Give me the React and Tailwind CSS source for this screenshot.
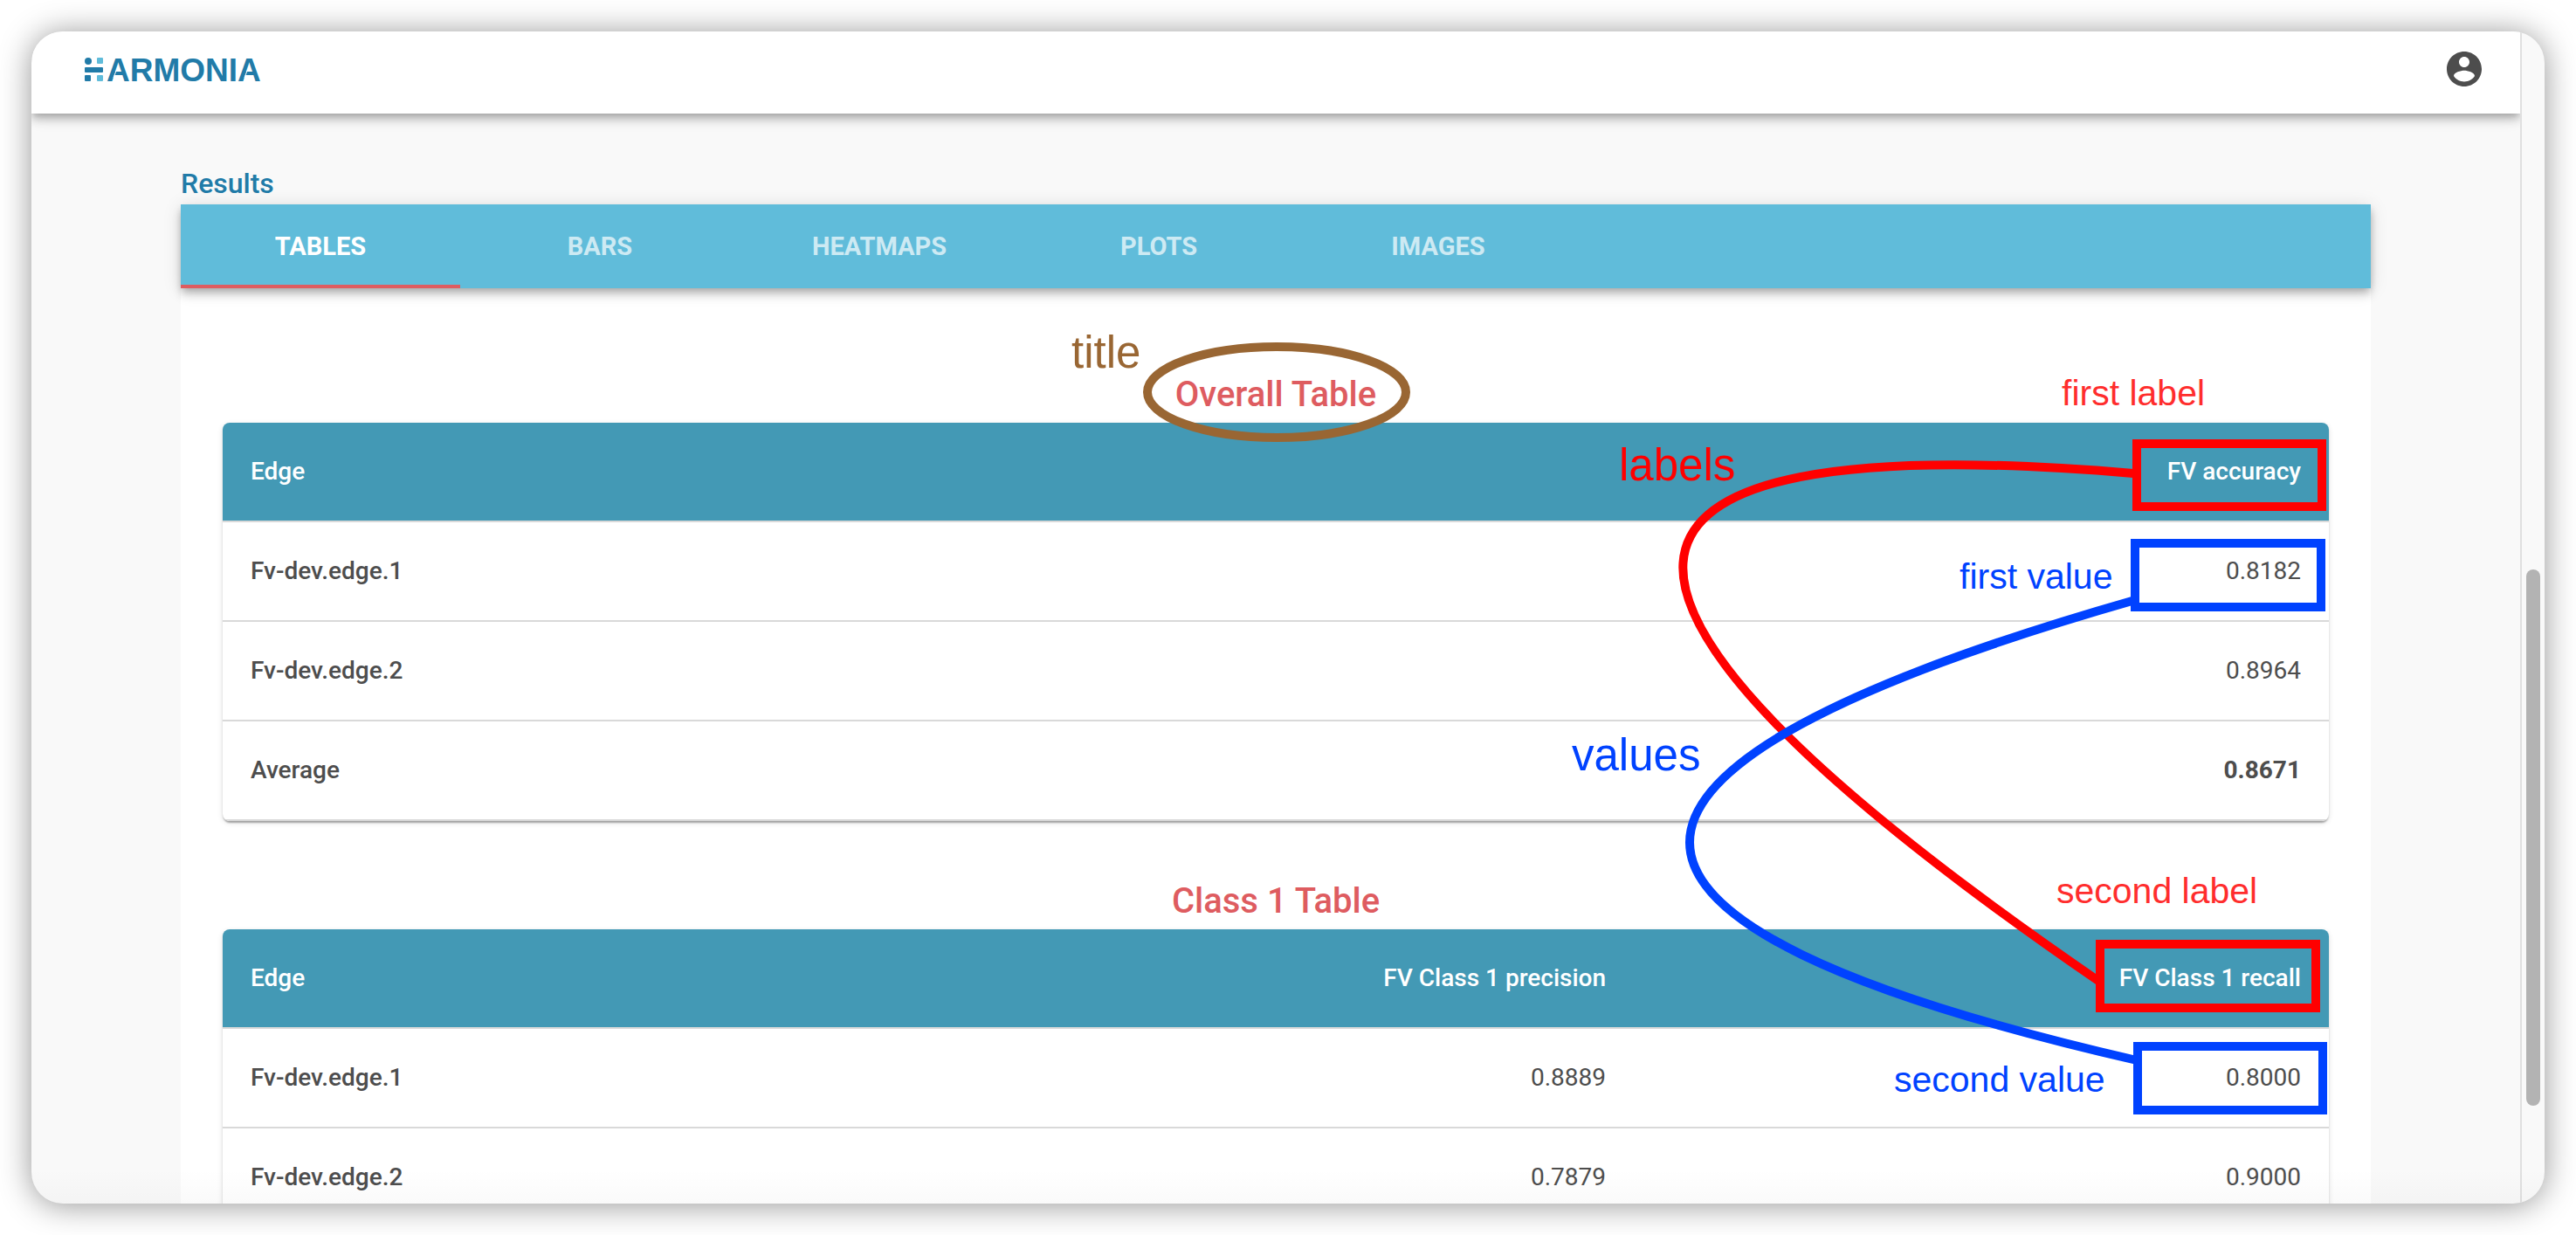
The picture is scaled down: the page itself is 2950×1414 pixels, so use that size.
import React from 'react';

const tabs = ['TABLES', 'BARS', 'HEATMAPS', 'PLOTS', 'IMAGES'];

const tables = [
  {
    title: 'Overall Table',
    columns: ['FV accuracy'],
    rows: [
      { name: 'Fv-dev.edge.1', values: ['0.8182'] },
      { name: 'Fv-dev.edge.2', values: ['0.8964'] },
      { name: 'Average', values: ['0.8671'], strong: true },
    ],
  },
  {
    title: 'Class 1 Table',
    columns: ['FV Class 1 precision', 'FV Class 1 recall'],
    rows: [
      { name: 'Fv-dev.edge.1', values: ['0.8889', '0.8000'] },
      { name: 'Fv-dev.edge.2', values: ['0.7879', '0.9000'] },
    ],
  },
];

function Logo() {
  return (
    <a href="#home" aria-label="Harmonia" className="text-[#217ba8]">
      <svg viewBox="0 0 220 40" className="h-10 w-[220px]" aria-hidden="true">
        <circle cx="4" cy="11" r="4" fill="#217ba8" />
        <rect x="14" y="7" width="7" height="7" rx="1" fill="#60bcda" />
        <rect x="0" y="18" width="21" height="6" rx="1" fill="#217ba8" />
        <rect x="0" y="27" width="7" height="7" rx="1" fill="#217ba8" />
        <rect x="14" y="27" width="7" height="7" rx="1" fill="#60bcda" />
        <text x="25" y="34" fontSize="37" fontWeight="700" fontFamily="'Liberation Sans', Arial, sans-serif" fill="currentColor">
          ARMONIA
        </text>
        <path d="M36 22L33 30M186 22L183 30" stroke="#ffffff" strokeWidth="1" />
      </svg>
    </a>
  );
}

function AccountIcon() {
  return (
    <svg viewBox="0 0 24 24" className="size-12" fill="#4d4d4d" aria-hidden="true">
      <path d="M12 2C6.48 2 2 6.48 2 12s4.48 10 10 10 10-4.48 10-10S17.52 2 12 2zm0 3c1.66 0 3 1.34 3 3s-1.34 3-3 3-3-1.34-3-3 1.34-3 3-3zm0 14.2c-2.5 0-4.71-1.28-6-3.22.03-1.99 4-3.08 6-3.08 1.99 0 5.97 1.09 6 3.08-1.29 1.94-3.5 3.22-6 3.22z" />
    </svg>
  );
}

function ResultTable({ title, columns, rows }) {
  return (
    <section>
      <h2 className="h-16 text-center text-[40px] leading-[64px] font-medium text-[#de5c60]">{title}</h2>
      <div className="overflow-hidden rounded-lg bg-white shadow-[0_4px_2px_-2px_rgba(0,0,0,0.2),0_2px_2px_rgba(0,0,0,0.14),0_2px_6px_rgba(0,0,0,0.12)]">
        <table className="w-full table-fixed border-separate border-spacing-0" aria-label={title}>
          <thead>
            <tr className="h-[114px] bg-[#4399b5] text-white">
              <th scope="col" className="border-b-2 border-[#d9d9d9] px-8 text-left font-medium">Edge</th>
              {columns.map((c, i) => (
                <th
                  key={c}
                  scope="col"
                  className={
                    i === 1
                      ? 'w-[33%] border-b-2 border-[#d9d9d9] px-8 text-right font-medium'
                      : 'border-b-2 border-[#d9d9d9] px-8 text-right font-medium'
                  }
                >
                  {c}
                </th>
              ))}
            </tr>
          </thead>
          <tbody>
            {rows.map((r) => (
              <tr key={r.name} className="h-[114px]">
                <th scope="row" className="border-b-2 border-[#d9d9d9] px-8 text-left font-medium">{r.name}</th>
                {r.values.map((v, i) => (
                  <td key={i} className={r.strong ? 'border-b-2 border-[#d9d9d9] px-8 text-right font-bold' : 'border-b-2 border-[#d9d9d9] px-8 text-right'}>{v}</td>
                ))}
              </tr>
            ))}
          </tbody>
        </table>
      </div>
    </section>
  );
}

function Annotations() {
  return (
    <svg
      viewBox="36 36 2850 1342"
      className="pointer-events-none absolute top-0 right-7 h-[1342px] w-[2850px]"
      fontFamily="'Liberation Sans', Arial, sans-serif"
    >
      <g fill="none" strokeWidth="10">
        <ellipse cx="1462" cy="449" rx="148" ry="52" stroke="#996633" />
        <path d="M2443 542Q1432 456 2403 1123" stroke="#ff0000" />
        <rect x="2447" y="508" width="212" height="72" stroke="#ff0000" />
        <rect x="2405" y="1081" width="247" height="73" stroke="#ff0000" />
        <path d="M2445 687Q1424 979 2447 1214" stroke="#0042ff" />
        <rect x="2445" y="622" width="213" height="73" stroke="#0042ff" />
        <rect x="2448" y="1198" width="212" height="73" stroke="#0042ff" />
      </g>
      <g fontSize="51">
        <text x="1227" y="421" fill="#996633">title</text>
        <text x="1854" y="550" fill="#ff0000">labels</text>
        <text x="1800" y="882" fill="#0042ff">values</text>
      </g>
      <g fontSize="41">
        <text x="2361" y="464" fill="#ff2d2d">first label</text>
        <text x="2244" y="674" fill="#0042ff">first value</text>
        <text x="2355" y="1034" fill="#ff2d2d">second label</text>
        <text x="2169" y="1250" fill="#0042ff">second value</text>
      </g>
    </svg>
  );
}

export default function App() {
  return (
    <div className="h-screen bg-white p-9 font-['Roboto',sans-serif] text-[28px] leading-10 text-[#4d4d4d]">
      <div className="relative flex h-full overflow-hidden rounded-[36px] bg-[#f9f9f9] shadow-[0_2px_36px_rgba(0,0,0,0.42)]">
        <div className="flex min-w-0 flex-1 flex-col overflow-hidden">
          <header className="z-10 flex h-[94px] shrink-0 items-center justify-between bg-white pr-10 pb-2 pl-[61px] shadow-[0_4px_8px_-2px_rgba(0,0,0,0.2),0_8px_10px_rgba(0,0,0,0.14),0_2px_20px_rgba(0,0,0,0.12)]">
            <Logo />
            <button type="button" aria-label="Account">
              <AccountIcon />
            </button>
          </header>
          <main className="mx-auto flex min-h-0 w-[88%] flex-1 flex-col pt-[60px]">
            <h1 className="pb-1 text-[32px] leading-10 font-medium text-[#217ba8]">Results</h1>
            <nav role="tablist" className="z-10 flex h-24 shrink-0 bg-[#60bcda] shadow-[0_4px_8px_-2px_rgba(0,0,0,0.2),0_8px_10px_rgba(0,0,0,0.14),0_2px_20px_rgba(0,0,0,0.12)]">
              {tabs.map((t, i) => (
                <button
                  key={t}
                  type="button"
                  role="tab"
                  aria-selected={i === 0}
                  className={
                    i === 0
                      ? 'w-80 border-y-4 border-t-transparent border-b-[#de5c60] text-[29px] font-bold text-white'
                      : 'w-80 border-y-4 border-transparent text-[29px] font-bold text-white/70'
                  }
                >
                  {t}
                </button>
              ))}
            </nav>
            <div className="flex min-h-0 flex-1 flex-col gap-[60px] bg-white px-12 pt-[90px]">
              {tables.map((t) => (
                <ResultTable key={t.title} {...t} />
              ))}
            </div>
          </main>
        </div>
        <div className="flex w-7 shrink-0 flex-col items-center border-l-2 border-[#e0e0e0] pt-[616px]">
          <div className="h-[614px] w-4 rounded-full bg-[#b3b3b3]" />
        </div>
        <div className="pointer-events-none absolute inset-x-0 bottom-0 z-20 h-10 bg-linear-to-t from-black/2 to-transparent" />
        <Annotations />
      </div>
    </div>
  );
}
